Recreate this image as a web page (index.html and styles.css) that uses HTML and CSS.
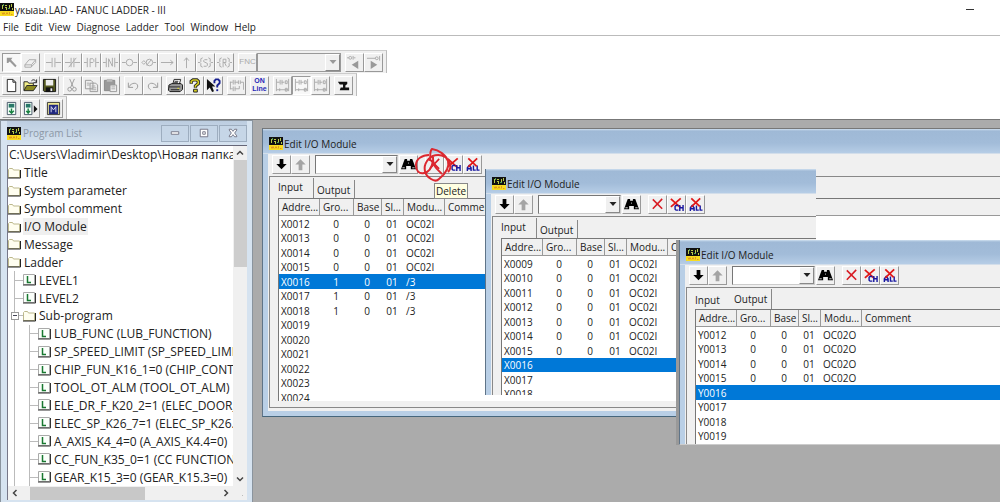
FILE: index.html
```html
<!DOCTYPE html>
<html lang="en">
<head>
<meta charset="utf-8">
<title>укыаы.LAD - FANUC LADDER - III</title>
<link rel="stylesheet" href="styles.css">
</head>
<body>
<svg class="defs" aria-hidden="true">
  <symbol id="app" viewBox="0 0 14 13"><path fill="#111" d="M0 0h14v8H0z"/><path stroke="#b8c848" d="M2.500 2v4M5 2.500h2M5 4.500h2M6.500 5v2M9.500 2v4M11.500 1v3M12.500 5v2"/><path stroke="#4a9a5a" d="M3.500 1v2M8 5.500h2"/><path fill="#f8dc20" d="M0 8h14v5H0z"/><path fill="none" stroke="#e09820" d="M2 9.500l1 2 1-2 1 2M6 11.500l1-2 1 2M9.500 9v2.500M11 11.500h1.500"/></symbol>
  <symbol id="arrow" viewBox="0 0 16 16"><path d="M3 3h6L7.500 5l6 6.500-1.500 1.500L6 7 4.500 8.500H3z" fill="#999"/></symbol>
  <symbol id="eraser" viewBox="0 0 16 16"><path d="M2 10.500 6.500 5h7L9 10.500zM2 10.500v2.500h6.500L13.500 8V5M9 10.500V13" fill="none" stroke="#aaa"/></symbol>
  <symbol id="no" viewBox="0 0 16 16"><path d="M0 8h6M10 8h6M6.500 3v10M9.500 3v10" fill="none" stroke="#aaa"/></symbol>
  <symbol id="nc" viewBox="0 0 16 16"><path d="M0 8h6M10 8h6M6.500 3v10M9.500 3v10M4 13l8-10" fill="none" stroke="#aaa"/></symbol>
  <symbol id="pos" viewBox="0 0 16 16"><path d="M0 8h3M13 8h3M3.500 3v10M12.500 3v10M6.500 13V4h3l1 1v2l-1 1h-3" fill="none" stroke="#aaa"/></symbol>
  <symbol id="neg" viewBox="0 0 16 16"><path d="M0 8h3M13 8h3M3.500 3v10M12.500 3v10M6 13V4l4 8V3" fill="none" stroke="#aaa"/></symbol>
  <symbol id="coil" viewBox="0 0 16 16"><circle cx="8" cy="8" r="3.500" fill="none" stroke="#aaa"/><path d="M0 8h4M12 8h4" stroke="#aaa"/></symbol>
  <symbol id="ncoil" viewBox="0 0 16 16"><circle cx="9" cy="8" r="3.500" fill="none" stroke="#aaa"/><path d="M1 8l2-2 2 2-2 2zM13 8h3M6 11l5-6" fill="none" stroke="#aaa"/></symbol>
  <symbol id="right" viewBox="0 0 16 16"><path d="M1 8h13M11 5.500l3 2.500-3 2.500" fill="none" stroke="#aaa"/></symbol>
  <symbol id="up" viewBox="0 0 16 16"><path d="M8 14V3M5.500 6 8 3l2.500 3" fill="none" stroke="#aaa"/></symbol>
  <symbol id="set" viewBox="0 0 16 16"><path d="M0 8h2l1-1V4l2-1M2 8l1 1v3l2 1M16 8h-2l-1-1V4l-2-1M14 8l-1 1v3l-2 1M10 5H7L6 6v1l4 2v2l-1 1H6" fill="none" stroke="#aaa"/></symbol>
  <symbol id="rst" viewBox="0 0 16 16"><path d="M0 8h2l1-1V4l2-1M2 8l1 1v3l2 1M16 8h-2l-1-1V4l-2-1M14 8l-1 1v3l-2 1M6.500 13V4.500h3v3.500h-3M8 8l2 4" fill="none" stroke="#aaa"/></symbol>
  <symbol id="prevc" viewBox="0 0 16 16"><path d="M12 6v9L5 10.500z" fill="#999"/><path d="M0 3h2M6.500 1v4M9 3H7" stroke="#aaa"/><circle cx="3.500" cy="3" r="1.500" fill="none" stroke="#aaa"/></symbol>
  <symbol id="nextc" viewBox="0 0 16 16"><path d="M5 6v9l7-4.500z" fill="#999"/><path d="M1 3.500h9M14.500 1v5" stroke="#aaa"/><circle cx="11.500" cy="3.500" r="1.500" fill="none" stroke="#aaa"/></symbol>
  <symbol id="new" viewBox="0 0 16 16"><path d="M3.500 1.500h6l3 3v10h-9zM9.500 1.500v3h3" fill="#fff" stroke="#222"/></symbol>
  <symbol id="open" viewBox="0 0 16 16"><path d="M1 13V4h4l1 1.500h5V8" fill="#f4f08a" stroke="#222"/><path d="M1 13.500 4 8h11l-4 5.500z" fill="#8c8a20" stroke="#222"/><path d="M9 3c2-2 4-1 5 1M14.500 1.500V5H11" fill="none" stroke="#222"/></symbol>
  <symbol id="save" viewBox="0 0 16 16"><path d="M1.500 1.500h13v13h-12l-1-1z" fill="#555a20" stroke="#111"/><path fill="#eee" d="M4 2h8v6H4z"/><path fill="#111" d="M4 10h8v5H4z"/><path fill="#eee" d="M9 11h2v3H9z"/></symbol>
  <symbol id="cut" viewBox="0 0 16 16"><path d="M5 1l4 9M10 1 6 10" fill="none" stroke="#999"/><circle cx="5" cy="12" r="2" fill="none" stroke="#999"/><circle cx="10" cy="12" r="2" fill="none" stroke="#999"/></symbol>
  <symbol id="copy" viewBox="0 0 16 16"><path d="M1.500 2.500h6l2 2v7h-8zM6.500 5.500h6l2 2v7h-8z" fill="#eee" stroke="#999"/><path d="M3 5.500h3M3 7.500h3M8 8.500h4M8 10.500h5M8 12.500h5" stroke="#aaa"/></symbol>
  <symbol id="paste" viewBox="0 0 16 16"><path d="M1.500 2.500h11v11h-11z" fill="#999" stroke="#888"/><path d="M4 1h6v3H4z" fill="#bbb"/><path d="M7.500 7.500h7v7h-7z" fill="#eee" stroke="#999"/><path d="M9 9.500h4M9 11.500h4" stroke="#aaa"/></symbol>
  <symbol id="undo" viewBox="0 0 16 16"><path d="M2.500 5v5h5M3 9.500c3-5 9-5 9.500-1 0 2-1 3-2.500 4" fill="none" stroke="#999"/></symbol>
  <symbol id="redo" viewBox="0 0 16 16"><path d="M13.500 5v5h-5M13 9.500c-3-5-9-5-9.500-1 0 2 1 3 2.500 4" fill="none" stroke="#999"/></symbol>
  <symbol id="print" viewBox="0 0 16 16"><path d="M5 7 6.500 1.500h7L12 7" fill="#fff" stroke="#222"/><path d="M1 7.500 4 6h10l1.500 1.500V12L13 14.500H2L.5 13z" fill="#999" stroke="#111"/><path d="M1 9.500h12M3 12.500h9M7 3.500h4M6.500 5h4" stroke="#222"/><path d="M10 11h2" stroke="#e8e020"/></symbol>
  <symbol id="help" viewBox="0 0 16 16"><path d="M4.500 6V3.500L6.500 2h4l1.500 1.500v2.500L9 8.500v2" fill="none" stroke="#222" stroke-width="3.500"/><path d="M4.500 5.500v-2L6.500 2h4L12 3.500V6L9 8.500v1.500" fill="none" stroke="#d8d020" stroke-width="1.600"/><path d="M7 12h4v3H7z" fill="#d8d020" stroke="#222"/></symbol>
  <symbol id="ctx" viewBox="0 0 16 16"><path d="M1 1v12l3-3 2.500 5 2-1-2-5H10z" fill="#111"/><path d="M9 5.500V3l1.500-1.500H13L14.500 3v2.500L12 8v2" fill="none" stroke="#182090" stroke-width="2"/><path d="M11 12h2v2h-2z" fill="#182090"/></symbol>
  <symbol id="net" viewBox="0 0 16 16"><path d="M1 4.500h3M6 4.500h4M12 4.500h3.500v8M4.500 2v5M6.500 2v5M10 2.500v4M12 2.500v4M1 11.500h3M6 11.500h5v-3M4.500 9v5M6.500 9v5M1.500 4v8" fill="none" stroke="#aaa"/></symbol>
  <symbol id="lad" viewBox="0 0 16 16"><path d="M1.500 1v13M14.500 1v13M2 4.500h3M7 4.500h3M5.500 2v5M7.500 2v5M2 12.500h12M11 3h2v3h-2zM5 11v3M11 11h2v3h-2z" fill="none" stroke="#aaa"/></symbol>
  <symbol id="jump" viewBox="0 0 16 16"><path d="M2 4h10v2.500L10 8v2h4v3H4l1-3h2.500V7H4z" fill="#111"/></symbol>
  <symbol id="down1" viewBox="0 0 16 16"><path d="M3.500 1.500h9v13h-9z" fill="#f4fff8" stroke="#456"/><path d="M5 3h6v4H5z" fill="#287868"/><path d="M8 8v4M5.500 10.500 8 13l2.500-2.500" fill="none" stroke="#188040" stroke-width="1.500"/></symbol>
  <symbol id="down2" viewBox="0 0 16 16"><path d="M1.500 1.500h8v13h-8z" fill="#f4fff8" stroke="#456"/><path d="M3 3h5v4H3z" fill="#287868"/><path d="M5.500 8v4M3.500 10.500l2 2.500 2-2.500" fill="none" stroke="#188040" stroke-width="1.500"/><path d="M11.500 4.500v8l4-4z" fill="#111"/></symbol>
  <symbol id="mod" viewBox="0 0 16 16"><path d="M1.500 1.500h13v13h-13z" fill="#f0e890" stroke="#333"/><path d="M3 4h10v10H3z" fill="#202880"/><path d="M5.500 12V6L8 9.500 10.500 6v6" fill="none" stroke="#dde"/></symbol>
  <symbol id="adown" viewBox="0 0 16 16"><path d="M6 2h4v5.500h3.500L8 13 2.500 7.500H6z" fill="#000"/></symbol>
  <symbol id="aup" viewBox="0 0 16 16"><path d="M6 14h4V8h3.500L8 2.500 2.500 8H6z" fill="#a4a4a4"/></symbol>
  <symbol id="find" viewBox="0 0 16 16"><path d="M4 2h2.500v2h3V2H12l1.500 4L16 13h-5.500V9.500h-5V13H0l2.500-7z" fill="#000"/><path d="M1.500 11.500h2.500M12 11.500h2.500M7.500 6.500h1" stroke="#ddd"/></symbol>
  <symbol id="del" viewBox="0 0 16 16"><path d="M3 2.500 13 12.500M13 2 3 12.500" fill="none" stroke="#d81c24" stroke-width="1.700"/></symbol>
  <symbol id="delch" viewBox="0 0 16 16"><path d="M2 2 12 11M12.500 1.500 2 10.500" fill="none" stroke="#e01818" stroke-width="1.900"/><path d="M10 9H7.500L6.500 10v3l1 1H10M11.500 8.500V15M11.500 11.500H15M15 8.500V15" fill="none" stroke="#1818a0" stroke-width="1.500"/></symbol>
  <symbol id="delall" viewBox="0 0 16 16"><path d="M2.500 15v-3.500l2-2.500 2 2.500V15M2.500 12.500h4M9 9v5h2.500M13 9v5h2.500" fill="none" stroke="#1818a0" stroke-width="1.500"/><path d="M3.500 1.500 12.500 10M13 1.500 3.500 10.500" fill="none" stroke="#e01818" stroke-width="1.900"/></symbol>
  <symbol id="tri" viewBox="0 0 8 8"><path d="M.5 2h7L4 6z" fill="currentColor"/></symbol>
  <symbol id="folder" viewBox="0 0 13 12"><path d="M.5 10.500v-8l1-1h3l1 1.500h6v7.500z" fill="#fffef0" stroke="#bcb88c"/><path d="M0 11h12.500V3" fill="none" stroke="#222"/></symbol>
  <symbol id="lfile" viewBox="0 0 13 12"><path d="M.5.5h11v10H.5z" fill="#fbfffb" stroke="#aaa"/><path d="M0 11h12.500V1" fill="none" stroke="#333"/><path d="M4.500 2v6.500H8" fill="none" stroke="#187830" stroke-width="1.500"/></symbol>
  <symbol id="chev" viewBox="0 0 8 8"><path d="M1 5.500 4 2.500l3 3" fill="none" stroke="#444" stroke-width="1.500"/></symbol>
</svg>

<header class="titlebar">
  <svg class="app-icon"><use href="#app"/></svg>
  <h1>укыаы.LAD - FANUC LADDER - III</h1>
  <button class="min" aria-label="Minimize"></button>
</header>
<nav class="menu">
  <button>File</button><button>Edit</button><button>View</button><button>Diagnose</button><button>Ladder</button><button>Tool</button><button>Window</button><button>Help</button>
</nav>

<div class="toolbars">
  <div class="bar">
    <div class="group">
      <button class="tb pressed" aria-label="Select"><svg><use href="#arrow"/></svg></button>
      <button class="tb" aria-label="Erase"><svg><use href="#eraser"/></svg></button>
    </div>
    <div class="group">
      <button class="tb" aria-label="Contact"><svg><use href="#no"/></svg></button>
      <button class="tb" aria-label="Closed contact"><svg><use href="#nc"/></svg></button>
      <button class="tb" aria-label="Rising contact"><svg><use href="#pos"/></svg></button>
      <button class="tb" aria-label="Falling contact"><svg><use href="#neg"/></svg></button>
      <button class="tb" aria-label="Coil"><svg><use href="#coil"/></svg></button>
      <button class="tb" aria-label="Negated coil"><svg><use href="#ncoil"/></svg></button>
      <button class="tb" aria-label="Horizontal line"><svg><use href="#right"/></svg></button>
      <button class="tb" aria-label="Vertical line"><svg><use href="#up"/></svg></button>
      <button class="tb" aria-label="Set coil"><svg><use href="#set"/></svg></button>
      <button class="tb" aria-label="Reset coil"><svg><use href="#rst"/></svg></button>
    </div>
    <div class="group">
      <button class="tb fnc">FNC</button>
      <label class="combo disabled"><select aria-label="Function" disabled><option></option></select><span class="drop"><svg><use href="#tri"/></svg></span></label>
    </div>
    <div class="group">
      <button class="tb" aria-label="Previous coil"><svg><use href="#prevc"/></svg></button>
      <button class="tb" aria-label="Next coil"><svg><use href="#nextc"/></svg></button>
    </div>
  </div>
  <div class="bar">
    <div class="group">
      <button class="tb" aria-label="New"><svg><use href="#new"/></svg></button>
      <button class="tb" aria-label="Open"><svg><use href="#open"/></svg></button>
      <button class="tb" aria-label="Save"><svg><use href="#save"/></svg></button>
    </div>
    <div class="group">
      <button class="tb" aria-label="Cut"><svg><use href="#cut"/></svg></button>
      <button class="tb" aria-label="Copy"><svg><use href="#copy"/></svg></button>
      <button class="tb" aria-label="Paste"><svg><use href="#paste"/></svg></button>
    </div>
    <div class="group">
      <button class="tb" aria-label="Undo"><svg><use href="#undo"/></svg></button>
      <button class="tb" aria-label="Redo"><svg><use href="#redo"/></svg></button>
    </div>
    <div class="group">
      <button class="tb" aria-label="Print"><svg><use href="#print"/></svg></button>
      <button class="tb" aria-label="Help"><svg><use href="#help"/></svg></button>
      <button class="tb" aria-label="Context help"><svg><use href="#ctx"/></svg></button>
    </div>
    <div class="group">
      <button class="tb" aria-label="Net"><svg><use href="#net"/></svg></button>
    </div>
    <div class="group">
      <button class="tb online">ON<br>Line</button>
    </div>
    <div class="group">
      <button class="tb" aria-label="Ladder view 1"><svg><use href="#lad"/></svg></button>
      <button class="tb pressed" aria-label="Ladder view 2"><svg><use href="#lad"/></svg></button>
      <button class="tb" aria-label="Ladder view 3"><svg><use href="#lad"/></svg></button>
    </div>
    <div class="group">
      <button class="tb" aria-label="Jump"><svg><use href="#jump"/></svg></button>
    </div>
  </div>
  <div class="bar">
    <div class="group">
      <button class="tb" aria-label="Load"><svg><use href="#down1"/></svg></button>
      <button class="tb" aria-label="Load next"><svg><use href="#down2"/></svg></button>
    </div>
    <div class="group">
      <button class="tb" aria-label="Monitor"><svg><use href="#mod"/></svg></button>
    </div>
  </div>
</div>

<main class="mdi">
  <section class="win programs">
    <header class="caption">
      <svg class="app-icon"><use href="#app"/></svg>
      <h2>Program List</h2>
      <div class="caption-buttons">
        <button aria-label="Minimize"><svg viewBox="0 0 12 12"><path d="M1.500 4.500h9v3h-9z" fill="#fff" stroke="#667"/></svg></button>
        <button aria-label="Maximize"><svg viewBox="0 0 12 12"><path d="M1.500 1.500h9v9h-9zM4.500 4.500h3v3h-3z" fill="#fff" stroke="#667"/></svg></button>
        <button aria-label="Close"><svg viewBox="0 0 12 12"><path d="M1.500 1.500h2.500l2 2.500 2-2.500h2.500v1L8 6l2.500 3.500v1H8L6 8l-2 2.500H1.500v-1L4 6 1.500 2.500z" fill="#fff" stroke="#667"/></svg></button>
      </div>
    </header>
    <div class="tree-box">
      <ul class="tree" role="tree">
        <li class="path">C:\Users\Vladimir\Desktop\Новая папка</li>
        <li><svg><use href="#folder"/></svg><span>Title</span></li>
        <li><svg><use href="#folder"/></svg><span>System parameter</span></li>
        <li><svg><use href="#folder"/></svg><span>Symbol comment</span></li>
        <li><svg><use href="#folder"/></svg><span class="current">I/O Module</span></li>
        <li><svg><use href="#folder"/></svg><span>Message</span></li>
        <li><svg><use href="#folder"/></svg><span>Ladder</span></li>
        <li><i class="stem branch"></i><svg><use href="#lfile"/></svg><span>LEVEL1</span></li>
        <li><i class="stem branch"></i><svg><use href="#lfile"/></svg><span>LEVEL2</span></li>
        <li><i class="stem branch box"></i><svg><use href="#folder"/></svg><span>Sub-program</span></li>
        <li><i class="stem"></i><i class="stem branch"></i><svg><use href="#lfile"/></svg><span>LUB_FUNC (LUB_FUNCTION)</span></li>
        <li><i class="stem"></i><i class="stem branch"></i><svg><use href="#lfile"/></svg><span>SP_SPEED_LIMIT (SP_SPEED_LIMIT</span></li>
        <li><i class="stem"></i><i class="stem branch"></i><svg><use href="#lfile"/></svg><span>CHIP_FUN_K16_1=0 (CHIP_CONT</span></li>
        <li><i class="stem"></i><i class="stem branch"></i><svg><use href="#lfile"/></svg><span>TOOL_OT_ALM (TOOL_OT_ALM)</span></li>
        <li><i class="stem"></i><i class="stem branch"></i><svg><use href="#lfile"/></svg><span>ELE_DR_F_K20_2=1 (ELEC_DOOR_</span></li>
        <li><i class="stem"></i><i class="stem branch"></i><svg><use href="#lfile"/></svg><span>ELEC_SP_K26_7=1 (ELEC_SP_K26.7</span></li>
        <li><i class="stem"></i><i class="stem branch"></i><svg><use href="#lfile"/></svg><span>A_AXIS_K4_4=0 (A_AXIS_K4.4=0)</span></li>
        <li><i class="stem"></i><i class="stem branch"></i><svg><use href="#lfile"/></svg><span>CC_FUN_K35_0=1 (CC FUNCTION</span></li>
        <li><i class="stem"></i><i class="stem branch"></i><svg><use href="#lfile"/></svg><span>GEAR_K15_3=0 (GEAR_K15.3=0)</span></li>
      </ul>
      <div class="vscroll"><svg><use href="#chev"/></svg><span class="thumb"></span><svg class="flip"><use href="#chev"/></svg></div>
      <div class="hscroll"><svg class="turn-left"><use href="#chev"/></svg><span class="thumb"></span><svg class="turn-right"><use href="#chev"/></svg></div>
      <div class="grip"></div>
    </div>
  </section>

  <section class="win module module-a">
    <header class="caption"><svg class="app-icon"><use href="#app"/></svg><h2>Edit I/O Module</h2></header>
    <div class="client">
      <div class="tools">
        <button class="tb" aria-label="Down"><svg><use href="#adown"/></svg></button>
        <button class="tb" aria-label="Up"><svg><use href="#aup"/></svg></button>
        <label class="combo"><select aria-label="Search text"><option></option></select><span class="drop"><svg><use href="#tri"/></svg></span></label>
        <button class="tb find" aria-label="Find"><svg><use href="#find"/></svg></button>
        <button class="tb" aria-label="Delete"><svg><use href="#del"/></svg></button>
        <button class="tb" aria-label="Delete channel"><svg><use href="#delch"/></svg></button>
        <button class="tb" aria-label="Delete all"><svg><use href="#delall"/></svg></button>
      </div>
      <div class="pane">
        <div class="tabs"><button class="tab active">Input</button><button class="tab">Output</button></div>
        <div class="list">
          <table>
            <colgroup><col class="c1"><col class="c2"><col class="c3"><col class="c4"><col class="c5"><col></colgroup>
            <thead><tr><th>Addre...</th><th>Gro...</th><th>Base</th><th>Sl...</th><th>Modu...</th><th>Comment</th></tr></thead>
            <tbody>
              <tr><td>X0012</td><td>0</td><td>0</td><td>01</td><td>OC02I</td><td></td></tr>
              <tr><td>X0013</td><td>0</td><td>0</td><td>01</td><td>OC02I</td><td></td></tr>
              <tr><td>X0014</td><td>0</td><td>0</td><td>01</td><td>OC02I</td><td></td></tr>
              <tr><td>X0015</td><td>0</td><td>0</td><td>01</td><td>OC02I</td><td></td></tr>
              <tr class="selected"><td>X0016</td><td>1</td><td>0</td><td>01</td><td>/3</td><td></td></tr>
              <tr><td>X0017</td><td>1</td><td>0</td><td>01</td><td>/3</td><td></td></tr>
              <tr><td>X0018</td><td>1</td><td>0</td><td>01</td><td>/3</td><td></td></tr>
              <tr><td>X0019</td><td></td><td></td><td></td><td></td><td></td></tr>
              <tr><td>X0020</td><td></td><td></td><td></td><td></td><td></td></tr>
              <tr><td>X0021</td><td></td><td></td><td></td><td></td><td></td></tr>
              <tr><td>X0022</td><td></td><td></td><td></td><td></td><td></td></tr>
              <tr><td>X0023</td><td></td><td></td><td></td><td></td><td></td></tr>
              <tr><td>X0024</td><td></td><td></td><td></td><td></td><td></td></tr>
            </tbody>
          </table>
        </div>
      </div>
    </div>
    <div class="tooltip" role="tooltip">Delete</div>
    <svg class="mark" viewBox="0 0 40 40" aria-hidden="true"><path d="M17 15C18 10 16 6 19 3c7 1 14 6 16 12 2 7-3 13-9 18-2 2-5 2-8 0C11 29 10 21 14 15c4-6 12-8 18-4 6 4 7 11 3 15M16 9C9 9 3 13 3 19s3 9 8 8c6-1 8-6 9-12M20 11c-1 8 4 12 9 17" fill="none" stroke="#dc2830" stroke-width="2"/></svg>
  </section>

  <section class="win module module-b">
    <header class="caption"><svg class="app-icon"><use href="#app"/></svg><h2>Edit I/O Module</h2></header>
    <div class="client">
      <div class="tools">
        <button class="tb" aria-label="Down"><svg><use href="#adown"/></svg></button>
        <button class="tb" aria-label="Up"><svg><use href="#aup"/></svg></button>
        <label class="combo"><select aria-label="Search text"><option></option></select><span class="drop"><svg><use href="#tri"/></svg></span></label>
        <button class="tb find" aria-label="Find"><svg><use href="#find"/></svg></button>
        <button class="tb" aria-label="Delete"><svg><use href="#del"/></svg></button>
        <button class="tb" aria-label="Delete channel"><svg><use href="#delch"/></svg></button>
        <button class="tb" aria-label="Delete all"><svg><use href="#delall"/></svg></button>
      </div>
      <div class="pane">
        <div class="tabs"><button class="tab active">Input</button><button class="tab">Output</button></div>
        <div class="list">
          <table>
            <colgroup><col class="c1"><col class="c2"><col class="c3"><col class="c4"><col class="c5"><col></colgroup>
            <thead><tr><th>Addre...</th><th>Gro...</th><th>Base</th><th>Sl...</th><th>Modu...</th><th>C</th></tr></thead>
            <tbody>
              <tr><td>X0009</td><td>0</td><td>0</td><td>01</td><td>OC02I</td><td></td></tr>
              <tr><td>X0010</td><td>0</td><td>0</td><td>01</td><td>OC02I</td><td></td></tr>
              <tr><td>X0011</td><td>0</td><td>0</td><td>01</td><td>OC02I</td><td></td></tr>
              <tr><td>X0012</td><td>0</td><td>0</td><td>01</td><td>OC02I</td><td></td></tr>
              <tr><td>X0013</td><td>0</td><td>0</td><td>01</td><td>OC02I</td><td></td></tr>
              <tr><td>X0014</td><td>0</td><td>0</td><td>01</td><td>OC02I</td><td></td></tr>
              <tr><td>X0015</td><td>0</td><td>0</td><td>01</td><td>OC02I</td><td></td></tr>
              <tr class="selected"><td>X0016</td><td></td><td></td><td></td><td></td><td></td></tr>
              <tr><td>X0017</td><td></td><td></td><td></td><td></td><td></td></tr>
              <tr><td>X0018</td><td></td><td></td><td></td><td></td><td></td></tr>
            </tbody>
          </table>
        </div>
      </div>
    </div>
  </section>

  <section class="win module module-c">
    <header class="caption"><svg class="app-icon"><use href="#app"/></svg><h2>Edit I/O Module</h2></header>
    <div class="client">
      <div class="tools">
        <button class="tb" aria-label="Down"><svg><use href="#adown"/></svg></button>
        <button class="tb" aria-label="Up"><svg><use href="#aup"/></svg></button>
        <label class="combo"><select aria-label="Search text"><option></option></select><span class="drop"><svg><use href="#tri"/></svg></span></label>
        <button class="tb find" aria-label="Find"><svg><use href="#find"/></svg></button>
        <button class="tb" aria-label="Delete"><svg><use href="#del"/></svg></button>
        <button class="tb" aria-label="Delete channel"><svg><use href="#delch"/></svg></button>
        <button class="tb" aria-label="Delete all"><svg><use href="#delall"/></svg></button>
      </div>
      <div class="pane">
        <div class="tabs"><button class="tab">Input</button><button class="tab active">Output</button></div>
        <div class="list">
          <table>
            <colgroup><col class="c1"><col class="c2"><col class="c3"><col class="c4"><col class="c5"><col></colgroup>
            <thead><tr><th>Addre...</th><th>Gro...</th><th>Base</th><th>Sl...</th><th>Modu...</th><th>Comment</th></tr></thead>
            <tbody>
              <tr><td>Y0012</td><td>0</td><td>0</td><td>01</td><td>OC02O</td><td></td></tr>
              <tr><td>Y0013</td><td>0</td><td>0</td><td>01</td><td>OC02O</td><td></td></tr>
              <tr><td>Y0014</td><td>0</td><td>0</td><td>01</td><td>OC02O</td><td></td></tr>
              <tr><td>Y0015</td><td>0</td><td>0</td><td>01</td><td>OC02O</td><td></td></tr>
              <tr class="selected"><td>Y0016</td><td></td><td></td><td></td><td></td><td></td></tr>
              <tr><td>Y0017</td><td></td><td></td><td></td><td></td><td></td></tr>
              <tr><td>Y0018</td><td></td><td></td><td></td><td></td><td></td></tr>
              <tr><td>Y0019</td><td></td><td></td><td></td><td></td><td></td></tr>
            </tbody>
          </table>
        </div>
      </div>
    </div>
  </section>
</main>
</body>
</html>
```
FILE: styles.css
```css
* { box-sizing: border-box; }
html, body { margin: 0; height: 100%; }
body {
  display: flex;
  flex-direction: column;
  overflow: hidden;
  background: #fff;
  color: #222;
  font: 10px/14px "Open Sans", "Noto Sans", sans-serif;
}
h1, h2 { margin: 0; font-size: inherit; font-weight: 400; }
button { margin: 0; padding: 0; border: 0; background: none; color: inherit; font: inherit; }
.defs { position: absolute; width: 0; height: 0; }
.app-icon { flex: none; width: 14px; height: 13px; }

.titlebar { display: flex; align-items: center; gap: 1px; height: 19px; flex: none; }
.titlebar h1 { flex: 1; }
.min { width: 8px; height: 1px; margin-right: 26px; background: #333; }
.menu { display: flex; gap: 6px; height: 17px; flex: none; padding-left: 3px; border-bottom: 1px solid #bbb; }
.menu button { height: 16px; }

.toolbars { display: flex; flex-direction: column; align-items: flex-start; flex: none; padding-top: 14px; }
.bar {
  display: flex;
  align-items: center;
  gap: 4px;
  height: 23px;
  padding: 0 3px 0 2px;
  background: #f0f0f0;
  border-top: 1px solid #ccc;
  border-right: 1px solid #bbb;
}
.group { display: flex; }
.tb {
  display: flex;
  align-items: center;
  justify-content: center;
  flex: none;
  width: 19px;
  height: 19px;
  background: #f0f0f0;
  border: 1px solid;
  border-color: #fff #999 #999 #fff;
}
.tb svg { width: 15px; height: 15px; }
.pressed { background: #f8f8f8; border-color: #999 #fff #fff #999; }
.fnc { color: #aaa; font: 8px/8px "Liberation Sans", sans-serif; }
.online { color: #2828b8; font: bold 7px/8px "Liberation Sans", sans-serif; }
.combo {
  display: flex;
  flex: none;
  width: 84px;
  height: 19px;
  background: #fff;
  border: 1px solid;
  border-color: #777 #ccc #ccc #777;
}
.combo select { flex: 1; min-width: 0; appearance: none; border: 0; background: transparent; }
.drop {
  display: flex;
  align-items: center;
  justify-content: center;
  width: 15px;
  background: #f0f0f0;
  border: 1px solid;
  border-color: #fff #888 #888 #fff;
  pointer-events: none;
}
.drop svg { width: 8px; height: 8px; }
.disabled { background: #f0f0f0; color: #999; border-color: #999; }

.mdi { position: relative; flex: 1; overflow: hidden; background: #ababab; border-top: 1px solid #777; }
.win { position: absolute; display: flex; flex-direction: column; }
.caption { display: flex; align-items: center; flex: none; gap: 1px; }

.programs {
  top: 0;
  bottom: 0;
  left: 0;
  width: 253px;
  padding: 0 5px 2px 6px;
  background: #d6e3f0;
  border: solid #8a949e;
  border-width: 1px 1px 0;
}
.programs .caption { height: 24px; gap: 2px; color: #8c98a6; background: linear-gradient(#bccde0, #d6e3f0); }
.programs h2 { flex: 1; }
.caption-buttons { display: flex; gap: 1px; }
.caption-buttons button {
  display: flex;
  align-items: center;
  justify-content: center;
  width: 28px;
  height: 17px;
  border: 1px solid #9dadbf;
  background: #c6d6e7;
}
.caption-buttons svg { width: 10px; height: 10px; }
.tree-box {
  display: grid;
  flex: 1;
  min-height: 0;
  grid-template: minmax(0, 1fr) 14px / minmax(0, 1fr) 14px;
  background: #f0f0f0;
  border-top: 1px solid #667;
  border-left: 1px solid #778;
}
.tree {
  display: grid;
  grid-auto-rows: 1fr;
  margin: 0;
  padding: 0;
  overflow: hidden;
  background: #fff;
  list-style: none;
  font-size: 12px;
  line-height: 17px;
  white-space: nowrap;
}
.tree li { display: flex; align-items: center; min-width: 0; }
.tree svg { flex: none; width: 13px; height: 12px; margin-right: 2px; }
.tree span { padding: 0 1px; }
.tree .path { padding-left: 1px; }
.tree .current { background: #efefef; }
.stem {
  flex: none;
  align-self: stretch;
  width: 15px;
  background: linear-gradient(#bbb, #bbb) 6px 0 / 1px 100% no-repeat;
}
.branch {
  background:
    linear-gradient(#bbb, #bbb) 6px 0 / 1px 100% no-repeat,
    linear-gradient(#bbb, #bbb) 6px 50% / 9px 1px no-repeat;
}
.box {
  background:
    linear-gradient(#445, #445) 5px 50% / 4px 1px no-repeat,
    linear-gradient(#fff, #fff) 4px 50% / 6px 6px no-repeat,
    linear-gradient(#999, #999) 3px 50% / 8px 8px no-repeat,
    linear-gradient(#bbb, #bbb) 6px 0 / 1px 100% no-repeat,
    linear-gradient(#bbb, #bbb) 6px 50% / 9px 1px no-repeat;
}
.vscroll, .hscroll { display: flex; align-items: center; justify-content: space-between; }
.vscroll { flex-direction: column; padding: 3px 0; }
.vscroll svg, .hscroll svg { flex: none; width: 8px; height: 8px; }
.vscroll .thumb { width: 13px; height: 107px; margin: 3px 0 auto; background: #cdcdcd; }
.hscroll { padding: 0 3px; }
.hscroll .thumb { width: 115px; height: 13px; margin: 0 auto 0 11px; background: #c8c8c8; }
.flip { transform: rotate(180deg); }
.turn-left { transform: rotate(-90deg); }
.turn-right { transform: rotate(90deg); }
.grip { margin: 5px 2px 2px 5px; background: radial-gradient(circle, #bbb 1px, transparent 1px) 0 0 / 3px 3px; clip-path: polygon(100% 0, 100% 100%, 0 100%); }

.module { padding-left: 5px; background: #b9cfe6; border-left: 1px solid #5f7488; }
.module .caption { height: 25px; margin-left: -5px; padding: 5px 0 0 6px; background: linear-gradient(#cfe0f0, #9fb9d6 2px, #a2bcd9 14px, #b6cde6); border-bottom: 1px solid #d3deea; }
.module-a { top: 8px; left: 262px; right: 0; height: 289px; padding-bottom: 5px; border-top: 1px solid #777; border-bottom: 1px solid #46667c; }
.module-b { top: 49px; left: 485px; width: 331px; height: 226px; }
.module-c { top: 120px; left: 679px; right: 0; height: 205px; border-bottom: 1px solid #ccc; box-shadow: -3px 0 #999; }
.client { display: flex; flex: 1; min-height: 0; flex-direction: column; background: #f0f0f0; }
.module-a .client { padding-bottom: 3px; }
.tools { display: flex; align-items: center; flex: none; height: 22px; padding: 0 4px 2px; }
.tools .combo { width: 83px; margin: 0 1px 0 5px; }
.find { margin-right: 7px; }
.pane { display: flex; flex: 1; min-height: 0; flex-direction: column; margin-left: 1px; padding-left: 8px; border-top: 1px solid #888; border-left: 1px solid #888; }
.module-a .pane { padding-bottom: 6px; border-bottom: 1px solid #888; }
.tabs { display: flex; align-items: flex-end; flex: none; height: 21px; }
.tab { height: 18px; padding: 2px 4px 0 3px; border-right: 1px solid #888; }
.tab:first-child { width: 36px; padding: 0; text-align: left; }
.tab.active { height: 20px; padding-bottom: 3px; }
.module-c .tab:first-child { border-right-color: transparent; }
.list { flex: 1; min-height: 0; overflow: hidden; background: #fff; border-top: 1px solid #777; border-left: 1px solid #777; }
table { width: 100%; table-layout: fixed; border-collapse: separate; border-spacing: 0; }
.c1 { width: 41px; }
.c2 { width: 34px; }
.c3 { width: 28px; }
.c4 { width: 22px; }
.c5 { width: 41px; }
th { height: 17px; padding: 0 0 0 3px; overflow: hidden; background: #f0f0f0; border-right: 1px solid #999; border-bottom: 1px solid #999; font-weight: 400; line-height: 16px; text-align: left; white-space: nowrap; }
th:last-child { border-right: 0; }
td { height: 15px; padding: 0 4px 0 2px; line-height: 14px; text-align: center; }
tr:nth-child(even) td { height: 14px; }
td:first-child, td:nth-child(5) { text-align: left; }
.selected td { background: #0078d7; color: #fff; }

.tooltip { position: absolute; top: 54px; left: 171px; padding: 0 1px; background: #ffffe1; border: 1px solid #888; }
.mark { position: absolute; top: 17px; left: 150px; width: 40px; height: 40px; }
```
